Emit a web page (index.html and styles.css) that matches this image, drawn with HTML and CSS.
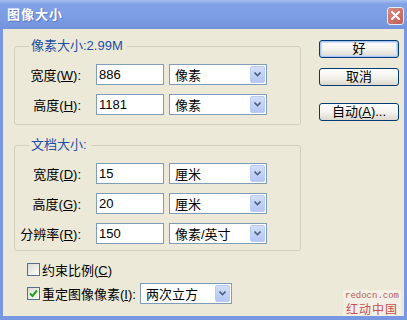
FILE: index.html
```html
<!DOCTYPE html>
<html>
    <head>
        <meta http-equiv="Content-Type" content="text/html; charset=UTF-8" />
        <title>图像大小</title>
        <link rel="stylesheet" href="styles.css">
    </head>
    <body>
        <div class="window">
            <div class="titlebar">
                <span class="title">图像大小</span>
                <span class="close">
                    <svg width="9" height="9" viewBox="0 0 9 9"><path d="M1 1L8 8M8 1L1 8" stroke="#fff" stroke-width="2" stroke-linecap="round"/></svg>
                </span>
            </div>
            <div class="frame">
                <div class="main">
                    <fieldset class="group group-size">
                        <legend>像素大小:2.99M</legend>
                        <div class="rows">
                            <div class="row">
                                <span class="label">宽度(<u>W</u>):</span>
                                <input class="field" type="text" value="886"/>
                                <div class="select"><span>像素</span><span class="drop"><svg width="7" height="5" viewBox="0 0 7 5"><path d="M0.5 0.5L3.5 3.5L6.5 0.5" fill="none" stroke="#4d6185" stroke-width="1.6"/></svg></span></div>
                            </div>
                            <div class="row">
                                <span class="label">高度(<u>H</u>):</span>
                                <input class="field" type="text" value="1181"/>
                                <div class="select"><span>像素</span><span class="drop"><svg width="7" height="5" viewBox="0 0 7 5"><path d="M0.5 0.5L3.5 3.5L6.5 0.5" fill="none" stroke="#4d6185" stroke-width="1.6"/></svg></span></div>
                            </div>
                        </div>
                    </fieldset>
                    <fieldset class="group group-doc">
                        <legend>文档大小:</legend>
                        <div class="rows">
                            <div class="row">
                                <span class="label">宽度(<u>D</u>):</span>
                                <input class="field" type="text" value="15"/>
                                <div class="select"><span>厘米</span><span class="drop"><svg width="7" height="5" viewBox="0 0 7 5"><path d="M0.5 0.5L3.5 3.5L6.5 0.5" fill="none" stroke="#4d6185" stroke-width="1.6"/></svg></span></div>
                            </div>
                            <div class="row">
                                <span class="label">高度(<u>G</u>):</span>
                                <input class="field" type="text" value="20"/>
                                <div class="select"><span>厘米</span><span class="drop"><svg width="7" height="5" viewBox="0 0 7 5"><path d="M0.5 0.5L3.5 3.5L6.5 0.5" fill="none" stroke="#4d6185" stroke-width="1.6"/></svg></span></div>
                            </div>
                            <div class="row">
                                <span class="label">分辨率(<u>R</u>):</span>
                                <input class="field" type="text" value="150"/>
                                <div class="select"><span>像素/英寸</span><span class="drop"><svg width="7" height="5" viewBox="0 0 7 5"><path d="M0.5 0.5L3.5 3.5L6.5 0.5" fill="none" stroke="#4d6185" stroke-width="1.6"/></svg></span></div>
                            </div>
                        </div>
                    </fieldset>
                    <div class="options">
                        <div class="check-row">
                            <span class="checkbox"></span>
                            <span class="check-label">约束比例(<u>C</u>)</span>
                        </div>
                        <div class="check-row">
                            <span class="checkbox"><svg width="9" height="9" viewBox="0 0 9 9"><path d="M1 4.5L3.5 7L8 1.5" fill="none" stroke="#21a121" stroke-width="2"/></svg></span>
                            <span class="check-label">重定图像像素(<u>I</u>):</span>
                            <div class="select select-small"><span>两次立方</span><span class="drop"><svg width="7" height="5" viewBox="0 0 7 5"><path d="M0.5 0.5L3.5 3.5L6.5 0.5" fill="none" stroke="#4d6185" stroke-width="1.6"/></svg></span></div>
                        </div>
                    </div>
                </div>
                <div class="buttons">
                    <button class="btn btn-default" type="button">好</button>
                    <button class="btn" type="button">取消</button>
                    <button class="btn btn-auto" type="button">自动(<u>A</u>)...</button>
                </div>
            </div>
            <div class="watermark">
                <div class="wm-url">redocn.com</div>
                <div class="wm-name">红动中国</div>
            </div>
        </div>
    </body>
</html>
```

FILE: styles.css
```css
body {
    margin: 0;
    font-family: "Liberation Sans", "Noto Sans CJK SC", sans-serif;
    font-size: 13px;
    color: #000;
    background: #ece9d8;
}
.window {
    position: relative;
    width: 407px;
    height: 320px;
    display: flex;
    flex-direction: column;
}
.titlebar {
    height: 29px;
    flex: none;
    display: flex;
    align-items: center;
    justify-content: space-between;
    padding: 0 3px 0 7px;
    background: linear-gradient(#a8c0f2 0px, #82a2e6 4px, #7c9ce3 60%, #7293dc 100%);
    box-sizing: border-box;
}
.title {
    color: #fff;
    font-weight: bold;
    font-size: 13px;
    letter-spacing: 1px;
    text-shadow: 1px 1px 0 #5a78c0;
    line-height: 16px;
}
.close {
    width: 17px;
    height: 18px;
    margin-top: 2px;
    box-sizing: border-box;
    border: 1px solid #e8eefc;
    border-radius: 3px;
    background: linear-gradient(135deg, #d98a84, #c15f58);
    display: flex;
    align-items: center;
    justify-content: center;
}
.frame {
    flex: 1;
    display: flex;
    gap: 18px;
    padding: 10px 0 0 11px;
    border: 3px solid #7797e0;
    border-top: 0;
    border-bottom-width: 4px;
}
.main {
    width: 287px;
}
.group {
    margin: 0;
    padding: 11px 0 6px 0;
    border: 1px solid #d0d0bf;
    border-radius: 3px;
    min-width: 0;
}
.group-size {
    padding-bottom: 9px;
    margin-bottom: 13px;
}
.group legend {
    margin-left: 14px;
    padding: 0 4px 0 2px;
    line-height: 14px;
    color: #1d4ea6;
}
.rows {
    display: flex;
    flex-direction: column;
    gap: 9px;
}
.row {
    display: flex;
    align-items: center;
    height: 21px;
}
.label {
    width: 66px;
    margin-right: 15px;
    text-align: right;
    white-space: nowrap;
}
.field {
    width: 68px;
    height: 21px;
    box-sizing: border-box;
    border: 1px solid #7f9db9;
    padding: 0 2px;
    margin: 0 5px 0 0;
    font: inherit;
    background: #fff;
    outline: none;
}
.select {
    width: 98px;
    height: 21px;
    box-sizing: border-box;
    border: 1px solid #7f9db9;
    background: #fff;
    display: flex;
    align-items: center;
    padding-left: 5px;
    white-space: nowrap;
}
.drop {
    margin: 1px 1px 1px auto;
    align-self: stretch;
    width: 15px;
    box-sizing: border-box;
    border: 1px solid #b8ccf6;
    border-radius: 2px;
    background: linear-gradient(#d2def9, #b4c7f3);
    display: flex;
    align-items: center;
    justify-content: center;
}
.options {
    margin-top: 8px;
    display: flex;
    flex-direction: column;
    gap: 3px;
}
.check-row {
    display: flex;
    align-items: center;
    height: 21px;
}
.checkbox {
    width: 13px;
    height: 13px;
    box-sizing: border-box;
    margin-left: 13px;
    border: 1px solid #55708f;
    background: linear-gradient(135deg, #dcdcd4, #fdfdfb);
    display: flex;
    align-items: center;
    justify-content: center;
}
.check-label {
    margin-left: 2px;
    white-space: nowrap;
}
.select-small {
    width: 92px;
    margin-left: 4px;
}
.buttons {
    width: 80px;
    padding-top: 1px;
    display: flex;
    flex-direction: column;
    gap: 10px;
}
.btn {
    width: 80px;
    height: 18px;
    padding: 0;
    font: inherit;
    line-height: 14px;
    color: #000;
    border: 1px solid #003c74;
    border-radius: 3px;
    background: linear-gradient(#ffffff, #f4f3ee 50%, #dcd8cc);
}
.btn-default {
    box-shadow: inset 0 0 0 1px #a9c4f3, inset 0 0 0 2px #cfdcf7;
}
.btn-auto {
    margin-top: 7px;
}
.watermark {
    position: absolute;
    left: 343px;
    top: 290px;
    width: 58px;
    padding: 2px 0 1px;
    display: flex;
    flex-direction: column;
    align-items: center;
    gap: 1px;
    background: rgba(255, 255, 255, 0.35);
    color: #c94d4d;
}
.wm-url {
    font-family: "Liberation Mono", monospace;
    font-size: 9px;
    line-height: 9px;
    color: #b55a5a;
}
.wm-name {
    font-family: "Noto Sans CJK SC", sans-serif;
    font-size: 12px;
    line-height: 13px;
    letter-spacing: 1px;
}
```
